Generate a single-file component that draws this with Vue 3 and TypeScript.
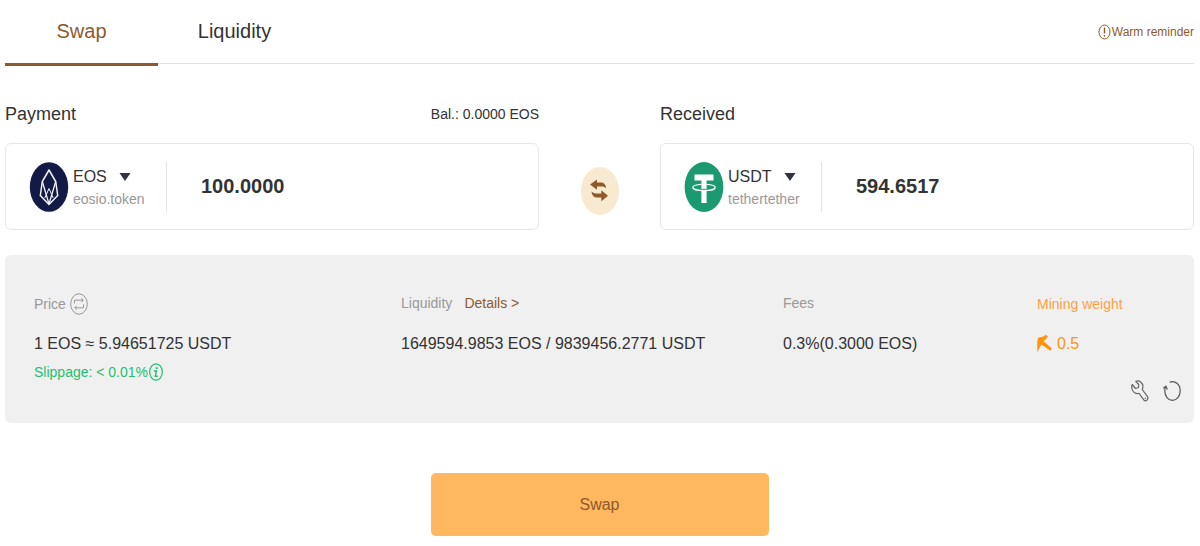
<script setup lang="ts">
import { ref } from 'vue'

type Tab = 'Swap' | 'Liquidity'

const tabs: Tab[] = ['Swap', 'Liquidity']
const activeTab = ref<Tab>('Swap')
const payAmount = ref('100.0000')
const receiveAmount = ref('594.6517')
</script>

<template>
  <main class="page">
    <header class="topbar">
      <nav class="tabs">
        <button
          v-for="tab in tabs"
          :key="tab"
          type="button"
          class="tab"
          :class="{ active: activeTab === tab }"
          @click="activeTab = tab"
        >{{ tab }}</button>
      </nav>
      <a class="reminder" href="#">
        <svg width="13" height="16" viewBox="0 0 13 16" fill="none" stroke="currentColor" aria-hidden="true">
          <ellipse cx="6.5" cy="8" rx="5.5" ry="7" />
          <path d="M6.5 3.5v6M6.5 11v1.5" stroke-width="1.4" />
        </svg>
        <span>Warm reminder</span>
      </a>
    </header>

    <section class="exchange">
      <div class="side">
        <div class="side-head">
          <label class="title" for="pay">Payment</label>
          <span class="balance">Bal.: 0.0000 EOS</span>
        </div>
        <div class="card">
          <button type="button" class="token">
            <svg width="40" height="50" viewBox="0 0 40 50" fill="none" aria-hidden="true">
              <ellipse cx="20" cy="25" rx="19.200" ry="24.800" fill="#121a45" />
              <g stroke="#f1f2f6" stroke-width="1.500" stroke-linejoin="round">
                <path d="M20 8L13.300 19.500L11.300 33.500L20 42.500L28.700 33.500L26.700 19.500Z" />
                <path d="M13.300 19.500L20 42L26.700 19.500" stroke-width="1.300" />
                <path d="M15.800 36L20 26.500L24.200 36" stroke-width="1" />
              </g>
            </svg>
            <span class="names">
              <span class="symbol">EOS
                <svg class="caret" width="12" height="8" viewBox="0 0 12 8" aria-hidden="true"><path d="M0.500 0h11L6 8z" fill="#303341" /></svg>
              </span>
              <span class="contract">eosio.token</span>
            </span>
          </button>
          <input id="pay" v-model="payAmount" class="amount" type="text" />
        </div>
      </div>

      <button type="button" class="flip" aria-label="Switch tokens">
        <svg width="38" height="48" viewBox="0 0 38 48" aria-hidden="true">
          <ellipse cx="19" cy="24" rx="19" ry="24" fill="#f7ead0" />
          <g fill="#8e5a2b">
            <path d="M9 17.500L16 12.500V15.500H19.500C22.800 15.500 25 17.500 25 21C23.500 19.800 21.800 19.500 19.500 19.500H16V22.800Z" />
            <path d="M27 28.700L20.300 23.200V26.500H17.500C14.500 26.500 12.300 26.300 10.500 24.500C10.800 28.300 13 30.600 16.800 30.600H20.300V34.200Z" />
          </g>
        </svg>
      </button>

      <div class="side">
        <div class="side-head">
          <label class="title" for="receive">Received</label>
        </div>
        <div class="card">
          <button type="button" class="token">
            <svg width="40" height="50" viewBox="0 0 40 50" fill="none" aria-hidden="true">
              <ellipse cx="20" cy="25" rx="19.400" ry="25" fill="#1b9a72" />
              <path d="M10.500 12.500H29.500V18.500H22.600V41H17.400V18.500H10.500Z" fill="#fff" />
              <path d="M17.400 22.400C12 22.700 8.800 23.900 8.800 25.400C8.800 27.200 13.800 28.600 20 28.600S31.200 27.200 31.200 25.400C31.200 23.900 28 22.700 22.600 22.400" stroke="#fff" stroke-width="1.300" />
              <path d="M17.400 27.300h5.200" stroke="#1b9a72" />
            </svg>
            <span class="names">
              <span class="symbol">USDT
                <svg class="caret" width="12" height="8" viewBox="0 0 12 8" aria-hidden="true"><path d="M0.500 0h11L6 8z" fill="#303341" /></svg>
              </span>
              <span class="contract">tethertether</span>
            </span>
          </button>
          <input id="receive" v-model="receiveAmount" class="amount" type="text" />
        </div>
      </div>
    </section>

    <section class="info">
      <div class="item">
        <div class="label tall">
          <span>Price</span>
          <button type="button" class="icon-btn" aria-label="Invert price">
            <svg width="18" height="22" viewBox="0 0 18 22" fill="none" stroke="#999" aria-hidden="true">
              <ellipse cx="9" cy="11" rx="8.300" ry="10.200" />
              <path d="M4.500 10.500V7.200H13M11.500 5.200L13.200 7.200L11.500 9.200M13.500 11.500V14.800H5M6.500 12.800L4.800 14.800L6.500 16.800" />
            </svg>
          </button>
        </div>
        <div class="value">1 EOS ≈ 5.94651725 USDT</div>
        <div class="slippage">
          <span>Slippage: &lt; 0.01%</span>
          <svg width="14" height="18" viewBox="0 0 14 18" fill="none" stroke="currentColor" aria-hidden="true">
            <ellipse cx="7" cy="9" rx="6.300" ry="8.200" stroke-width="1.200" />
            <path d="M5 8H7.300L6.300 13.300H8.800" stroke-width="1.400" />
            <path d="M7.700 4.200V6" stroke-width="1.800" />
          </svg>
        </div>
      </div>
      <div class="item">
        <div class="label">
          <span>Liquidity</span>
          <a class="details" href="#">Details &gt;</a>
        </div>
        <div class="value">1649594.9853 EOS / 9839456.2771 USDT</div>
      </div>
      <div class="item">
        <div class="label">Fees</div>
        <div class="value">0.3%(0.3000 EOS)</div>
      </div>
      <div class="item mining">
        <div class="label tall">Mining weight</div>
        <div class="value">
          <svg width="15" height="20" viewBox="0 0 15 20" fill="#ff9410" aria-hidden="true">
            <path d="M0.600 19C0 14 0 8 0.800 4.300L2.200 3.200C5 3.300 7 2.300 8.800 0.800L11 2.200C9.700 4.400 8.300 6 6.600 7.300L15 14.500L13.200 16.800L4.600 10.500C2.700 12.500 1.500 15.500 0.600 19Z" />
          </svg>
          <span>0.5</span>
        </div>
        <div class="tools">
          <button type="button" class="icon-btn" aria-label="Settings">
            <svg width="18" height="22" viewBox="0 0 18 22" fill="none" stroke="#666" stroke-width="1.200" stroke-linejoin="round" aria-hidden="true">
              <path d="M4.800 1.300C8.500 0 11.700 2.600 11.900 6.200C12 7.400 11.800 8.400 11.300 9.500L16.300 16.300C18 18.800 15.300 22.300 13 20.200L8 13.300C5 14.500 1.600 12.200 0.900 8.500C0.600 7 0.700 5.700 1.200 4.500L4.500 8.500L7.500 7.500L7.700 4.500Z" />
              <path d="M14.300 17.800v1.200" />
            </svg>
          </button>
          <button type="button" class="icon-btn" aria-label="Refresh">
            <svg width="18" height="22" viewBox="0 0 18 22" fill="none" stroke="#555" stroke-width="1.200" aria-hidden="true">
              <path d="M6.500 2.300C12 0 17.200 4.500 17.200 10.700C17.200 16.200 13.700 20.300 9.400 20.300C5 20.300 1.800 16.200 1.800 10.700C1.800 9.300 2 8 2.500 6.800" />
              <path d="M0.300 8.300L2.900 6.300L4.300 9.600" />
            </svg>
          </button>
        </div>
      </div>
    </section>

    <button type="button" class="submit">Swap</button>
  </main>
</template>

<style>
body {
  margin: 0;
  background: #fff;
}
</style>

<style scoped>
.page {
  padding: 0 6px 10px 5px;
  color: #333;
  font-family: "Liberation Sans", Arial, sans-serif;
  font-size: 14px;
}
button,
input {
  margin: 0;
  padding: 0;
  border: 0;
  background: none;
  color: inherit;
  font-family: inherit;
  font-size: inherit;
}
button {
  cursor: pointer;
}
a {
  text-decoration: none;
}
svg {
  display: block;
  flex: none;
}
.topbar {
  display: flex;
  align-items: center;
  justify-content: space-between;
  height: 63px;
  border-bottom: 1px solid #e3e3e3;
}
.tabs {
  display: flex;
  align-self: flex-start;
}
.tab {
  width: 153px;
  height: 66px;
  border-bottom: 3px solid transparent;
  font-size: 20px;
}
.tab.active {
  border-color: #8e5a2b;
  color: #8e5a2b;
}
.reminder {
  display: flex;
  align-items: center;
  gap: 1px;
  color: #8e5a2b;
  font-size: 12px;
}
.exchange {
  display: grid;
  grid-template-columns: minmax(0, 1fr) 121px minmax(0, 1fr);
  align-items: end;
  margin-top: 36px;
}
.side-head {
  display: flex;
  align-items: center;
  justify-content: space-between;
  height: 28px;
  margin-bottom: 15px;
}
.title {
  font-size: 18px;
}
.card {
  display: flex;
  align-items: center;
  height: 85px;
  padding-left: 23px;
  border: 1px solid #e6e6e6;
  border-radius: 6px;
}
.token {
  display: flex;
  align-items: center;
  gap: 4px;
  flex: none;
  width: 138px;
  height: 50px;
  border-right: 1px solid #e3e3e3;
  text-align: left;
}
.names {
  display: flex;
  flex-direction: column;
}
.symbol {
  display: flex;
  align-items: center;
  gap: 12px;
  font-size: 16px;
  line-height: 24px;
}
.contract {
  color: #999;
  line-height: 20px;
}
.amount {
  flex: 1;
  min-width: 0;
  padding: 0 34px;
  outline: 0;
  font-size: 20px;
  font-weight: 700;
}
.flip {
  justify-self: center;
  margin-bottom: 15px;
}
.info {
  display: grid;
  grid-template-columns: 367fr 382fr 254fr 157fr;
  margin-top: 25px;
  padding: 38px 0 21px 29px;
  border-radius: 6px;
  background: #f0f0f0;
}
.label {
  display: flex;
  align-items: center;
  gap: 12px;
  height: 20px;
  margin-bottom: 19px;
  color: #999;
}
.label.tall {
  gap: 4px;
  height: 22px;
  margin-bottom: 17px;
}
.details {
  color: #8e5a2b;
}
.value {
  display: flex;
  align-items: center;
  gap: 5px;
  font-size: 16px;
  line-height: 24px;
}
.slippage {
  display: flex;
  align-items: center;
  gap: 1px;
  margin-top: 4px;
  color: #1fbf71;
  line-height: 24px;
}
.mining,
.mining .label {
  color: #ff9f45;
}
.mining .value {
  color: #ff9410;
}
.tools {
  display: flex;
  justify-content: flex-end;
  gap: 14px;
  margin-top: 24px;
  padding-right: 13px;
  color: #666;
}
.submit {
  display: block;
  width: 338px;
  max-width: 100%;
  height: 63px;
  margin: 50px auto 0;
  border-radius: 5px;
  background: #ffb760;
  color: #8e5a2b;
  font-size: 16px;
}
</style>
